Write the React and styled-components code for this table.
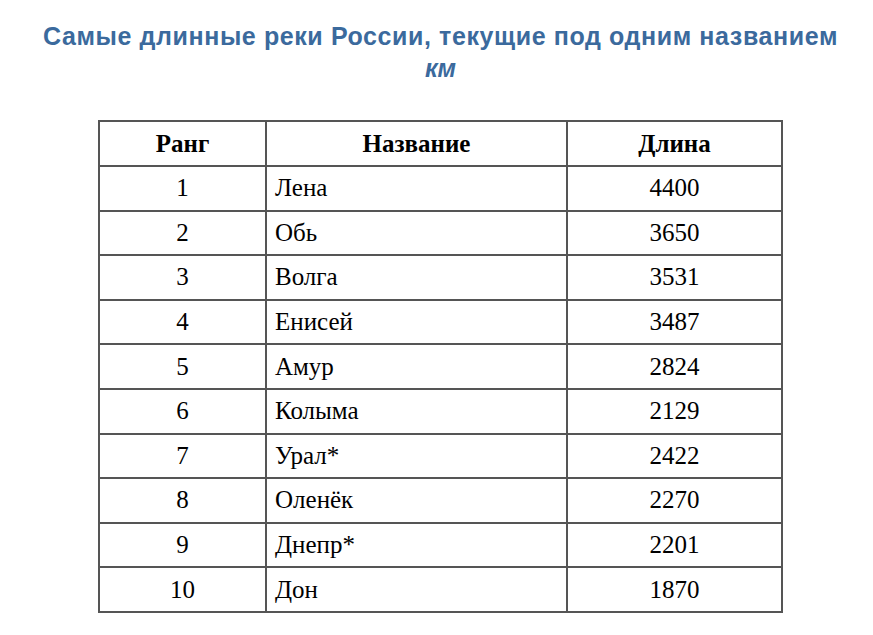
import React from "react";
import styled, { createGlobalStyle } from "styled-components";

const Global = createGlobalStyle`
  html, body { margin: 0; padding: 0; background: #ffffff; }
`;

const Page = styled.div`
  width: 873px;
  height: 635px;
  display: flex;
  flex-direction: column;
  align-items: center;
  padding: 20px 0 0 8px;
  box-sizing: border-box;
`;

const Title = styled.h1`
  margin: 0;
  font-family: "Liberation Sans", Arial, sans-serif;
  font-weight: bold;
  font-size: 25px;
  letter-spacing: 0.6px;
  line-height: 32px;
  color: #3b6a9d;
  text-align: center;
  white-space: nowrap;
`;

const Unit = styled.div`
  font-family: "Liberation Sans", Arial, sans-serif;
  font-weight: bold;
  font-style: italic;
  font-size: 25px;
  line-height: 32px;
  color: #3b6a9d;
  text-align: center;
`;

const Table = styled.table`
  margin-top: 36px;
  border-collapse: collapse;
  border: 2px solid #555;
  font-family: "Liberation Serif", "Times New Roman", serif;
  font-size: 25px;
  color: #000;
`;

const Th = styled.th`
  border: 2px solid #555;
  height: 43px;
  padding: 0 8px;
  font-weight: bold;
  text-align: center;
  width: ${(p) => p.$w}px;
`;

const Td = styled.td`
  border: 2px solid #555;
  height: 42.6px;
  padding: 0 8px;
  text-align: ${(p) => p.$align || "center"};
`;

const rows = [
  [1, "Лена", 4400],
  [2, "Обь", 3650],
  [3, "Волга", 3531],
  [4, "Енисей", 3487],
  [5, "Амур", 2824],
  [6, "Колыма", 2129],
  [7, "Урал*", 2422],
  [8, "Оленёк", 2270],
  [9, "Днепр*", 2201],
  [10, "Дон", 1870],
];

export default function App() {
  return (
    <>
      <Global />
      <Page>
        <Title>Самые длинные реки России, текущие под одним названием</Title>
        <Unit>км</Unit>
        <Table>
          <thead>
            <tr>
              <Th $w={149}>Ранг</Th>
              <Th $w={283}>Название</Th>
              <Th $w={197}>Длина</Th>
            </tr>
          </thead>
          <tbody>
            {rows.map(([r, n, l]) => (
              <tr key={r}>
                <Td>{r}</Td>
                <Td $align="left">{n}</Td>
                <Td>{l}</Td>
              </tr>
            ))}
          </tbody>
        </Table>
      </Page>
    </>
  );
}
